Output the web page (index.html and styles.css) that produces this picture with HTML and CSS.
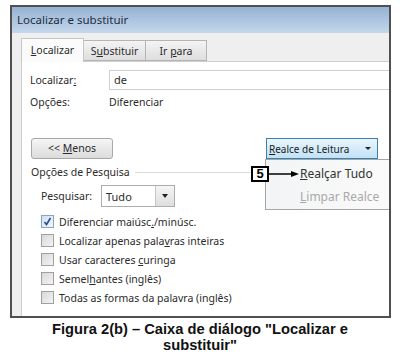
FILE: index.html
```html
<!DOCTYPE html>
<html lang="pt">
<head>
<meta charset="utf-8">
<title>Localizar e substituir</title>
<link rel="stylesheet" href="styles.css">
</head>
<body>
<div class="dialog">
  <div class="titlebar">Localizar e substituir</div>
  <div class="main">
    <div class="tabs">
      <div class="tab active"><u>L</u>ocalizar</div>
      <div class="tab">S<u>u</u>bstituir</div>
      <div class="tab">Ir <u>p</u>ara</div>
    </div>
    <div class="panel">
      <div class="row find">
        <span class="label">Localizar<u>:</u></span>
        <div class="textbox">de</div>
      </div>
      <div class="row opts">
        <span class="label">Opções:</span>
        <span>Diferenciar</span>
      </div>
      <div class="buttons">
        <div class="btn">&lt;&lt; <u>M</u>enos</div>
        <div class="realce-wrap">
          <div class="realce"><span><u>R</u>ealce de Leitura</span><span class="caret"></span></div>
          <div class="menu">
            <div class="item"><u>R</u>ealçar Tudo</div>
            <div class="item disabled"><u>L</u>impar Realce</div>
          </div>
          <div class="callout">
            <span class="num">5</span>
            <svg class="arrow" width="30" height="8" viewBox="0 0 30 8"><line x1="0" y1="4" x2="24" y2="4" stroke="#000" stroke-width="1.5"/><polygon points="22,1 30,4 22,7" fill="#000"/></svg>
          </div>
        </div>
      </div>
      <div class="group-head"><span>Opções de Pesquisa</span><span class="rule"></span></div>
      <div class="search-row">
        <span class="search-label">Pesquisar:</span>
        <div class="select"><span class="sel-text">Tudo</span><span class="sel-btn"><span class="caret"></span></span></div>
      </div>
      <div class="checks">
        <div class="check"><span class="box checked"><svg width="11" height="11" viewBox="0 0 11 11"><path d="M2.5 6 L4.5 8.5 L8.5 2" fill="none" stroke="#2a4f8f" stroke-width="1.6"/></svg></span><span>Diferenciar maiúsc<u>.</u>/minúsc.</span></div>
        <div class="check"><span class="box"></span><span>Localizar apenas pala<u>v</u>ras inteiras</span></div>
        <div class="check"><span class="box"></span><span>Usar caracteres <u>c</u>uringa</span></div>
        <div class="check"><span class="box"></span><span>Semel<u>h</u>antes (inglês)</span></div>
        <div class="check"><span class="box"></span><span>Todas as formas da palavra <u>(</u>inglês)</span></div>
      </div>
    </div>
  </div>
</div>
<p class="caption">Figura 2(b) – Caixa de diálogo "Localizar e<br>substituir"</p>
</body>
</html>
```
FILE: styles.css
```css
* { box-sizing: border-box; }
body {
  margin: 0;
  background: #fff;
  font-family: "Noto Sans", "Open Sans", sans-serif;
  font-size: 10.5px;
  color: #2b2b2b;
}
u { text-decoration: underline; text-underline-offset: 1px; }

.dialog {
  margin: 5px 0 0 10px;
  width: 381px;
  height: 313px;
  border: 2px solid #505050;
  background: #efefef;
  overflow: hidden;
  display: flex;
  flex-direction: column;
}
.titlebar {
  height: 26px;
  flex: none;
  padding-left: 5px;
  line-height: 26px;
  font-size: 11.5px;
  color: #1f2d3d;
  background: linear-gradient(#95b2d3, #c4d7ec);
}
.main {
  flex: 1;
  padding: 5px 0 0 9px;
  display: flex;
  flex-direction: column;
}
.tabs {
  display: flex;
  align-items: flex-end;
  height: 23px;
  flex: none;
  position: relative;
  z-index: 1;
}
.tab {
  height: 21px;
  line-height: 20px;
  text-align: center;
  border: 1px solid #b4b4b4;
  border-left: none;
  background: linear-gradient(#f4f4f4, #dedede);
}
.tab:nth-child(1) { width: 63px; }
.tab:nth-child(2) { width: 62px; }
.tab:nth-child(3) { width: 61px; }
.tab.active {
  height: 24px;
  margin-bottom: -1px;
  border-left: 1px solid #c6c6c6;
  border-color: #c6c6c6;
  border-bottom: none;
  background: #fbfbfb;
  line-height: 22px;
}
.panel {
  flex: 1;
  background: #fff;
  border-top: 1px solid #cfcfcf;
  border-left: 1px solid #cfcfcf;
  padding: 8px 0 0 8px;
}
.row {
  display: flex;
  align-items: center;
}
.label { width: 79px; flex: none; }
.textbox {
  width: 320px;
  flex: none;
  height: 20px;
  border: 1px solid #cfcfcf;
  padding-left: 4px;
  line-height: 18px;
  font-size: 11px;
}
.opts { height: 19px; margin-top: 2px; }

.buttons {
  width: 348px;
  margin-top: 27px;
  display: flex;
  justify-content: space-between;
}
.btn {
  margin-left: 1px;
  width: 82px;
  height: 21px;
  line-height: 19px;
  text-align: center;
  border: 1px solid #a8a8a8;
  border-radius: 3px;
  background: linear-gradient(#f5f5f5, #dcdcdc);
}
.realce-wrap { position: relative; }
.realce {
  width: 112px;
  height: 21px;
  border: 1px solid #3c7fb1;
  background: linear-gradient(#e9f5fc, #c0e2f6);
  display: flex;
  align-items: center;
  justify-content: space-between;
  padding: 0 6px 0 2px;
  font-size: 10px;
  color: #1b1b1b;
}
.caret {
  width: 0;
  height: 0;
  border-left: 3px solid transparent;
  border-right: 3px solid transparent;
  border-top: 3px solid #222;
}
.menu {
  position: absolute;
  left: -1px;
  top: 21px;
  width: 125px;
  height: 51px;
  border: 1px solid #a6a6a6;
  background: linear-gradient(90deg, #f3f4f5, #fafafa);
  padding-top: 2px;
  z-index: 2;
}
.item {
  height: 23px;
  line-height: 23px;
  padding-left: 34px;
  font-size: 12px;
  color: #333;
}
.item.disabled { color: #a9a9a9; }
.callout {
  position: absolute;
  left: -15px;
  top: 28px;
  display: flex;
  align-items: center;
  z-index: 3;
}
.num {
  width: 18px;
  height: 16px;
  border: 2px solid #000;
  background: #fff;
  font-family: "Liberation Sans", Arial, sans-serif;
  font-weight: bold;
  font-size: 13px;
  line-height: 12px;
  text-align: center;
  color: #000;
}
.arrow { display: block; margin-left: 0; }

.group-head {
  margin-top: 5px;
  height: 16px;
  width: 348px;
  display: flex;
  align-items: center;
  padding-left: 1px;
}
.rule {
  flex: 1;
  height: 1px;
  background: #dcdcdc;
  margin-left: 5px;
}
.search-row {
  margin-top: 5px;
  display: flex;
  align-items: center;
  padding-left: 11px;
}
.search-label { width: 60px; }
.select {
  width: 74px;
  height: 22px;
  border: 1px solid #adadad;
  display: flex;
  align-items: center;
  justify-content: space-between;
}
.sel-text { padding-left: 4px; font-size: 11px; }
.sel-btn {
  width: 19px;
  height: 20px;
  border-left: 1px solid #c8c8c8;
  background: linear-gradient(#f5f5f5, #dedede);
  display: flex;
  align-items: center;
  justify-content: center;
}
.sel-btn .caret { border-width: 4px 3.5px 0 3.5px; }
.checks { margin-top: 5px; padding-left: 11px; }
.check {
  height: 19px;
  display: flex;
  align-items: center;
  gap: 5px;
}
.box {
  width: 13px;
  height: 13px;
  flex: none;
  border: 1px solid #a0a0a0;
  background: linear-gradient(135deg, #d8d8d8, #f4f4f4);
  display: flex;
  align-items: center;
  justify-content: center;
}
.box.checked {
  border-color: #8ea3c0;
  background: linear-gradient(135deg, #cfe0f2, #f2f7fc);
}
.caption {
  margin: 3px 0 0;
  width: 400px;
  text-align: center;
  font-family: "Liberation Sans", Arial, sans-serif;
  font-weight: bold;
  font-size: 14.7px;
  line-height: 16px;
  color: #111;
}
```
